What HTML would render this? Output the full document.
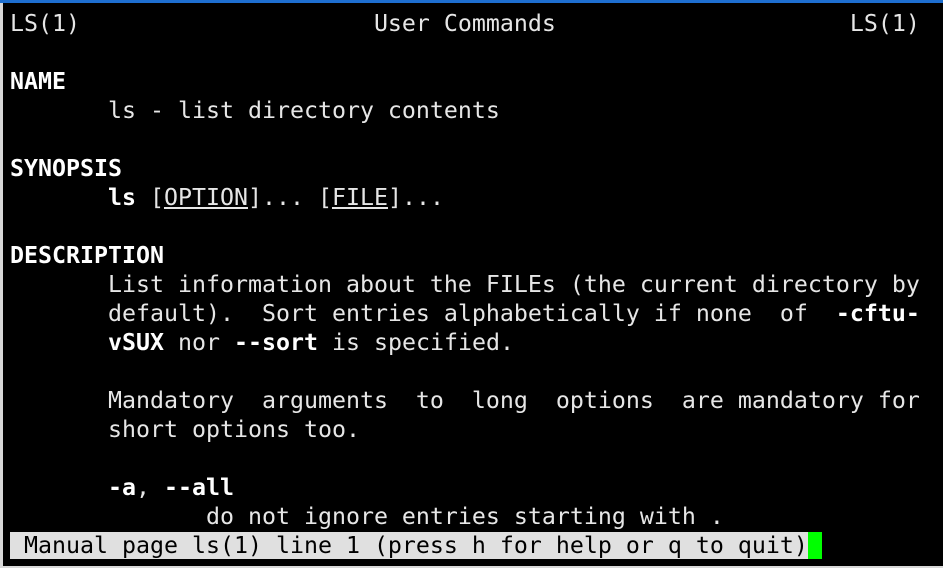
<!DOCTYPE html>
<html><head><meta charset="utf-8"><style>
html,body{margin:0;padding:0;}
body{width:943px;height:568px;background:#d8d8d8;position:relative;overflow:hidden;}
#t{position:absolute;left:3px;top:3px;width:940px;height:563px;background:#000;}
#bar{position:absolute;left:0;top:0;width:943px;height:3px;background:#1e6fd0;}
.r{position:absolute;left:10px;height:29px;line-height:29px;white-space:pre;font-family:"DejaVu Sans Mono","Liberation Mono",monospace;font-size:23.25px;color:#e6e6e6;}
b{color:#fff;font-weight:bold;}
u{text-decoration:underline;text-underline-offset:2px;}
.st{background:#e0e0e0;color:#000;}
.cur{background:#00ff00;}
</style></head><body>
<div id="bar"></div>
<div id="t"></div>
<div class="r" style="top:9px">LS(1)                     User Commands                     LS(1)</div>
<div class="r" style="top:67px"><b>NAME</b></div>
<div class="r" style="top:96px">       ls - list directory contents</div>
<div class="r" style="top:154px"><b>SYNOPSIS</b></div>
<div class="r" style="top:183px">       <b>ls</b> [<u>OPTION</u>]... [<u>FILE</u>]...</div>
<div class="r" style="top:241px"><b>DESCRIPTION</b></div>
<div class="r" style="top:270px">       List information about the FILEs (the current directory by</div>
<div class="r" style="top:299px">       default).  Sort entries alphabetically if none  of  <b>-cftu-</b></div>
<div class="r" style="top:328px">       <b>vSUX</b> nor <b>--sort</b> is specified.</div>
<div class="r" style="top:386px">       Mandatory  arguments  to  long  options  are mandatory for</div>
<div class="r" style="top:415px">       short options too.</div>
<div class="r" style="top:473px">       <b>-a</b>, <b>--all</b></div>
<div class="r" style="top:502px">              do not ignore entries starting with .</div>
<div class="r" style="top:531px"><span class="st"> Manual page ls(1) line 1 (press h for help or q to quit)</span><span class="cur"> </span></div>
</body></html>
